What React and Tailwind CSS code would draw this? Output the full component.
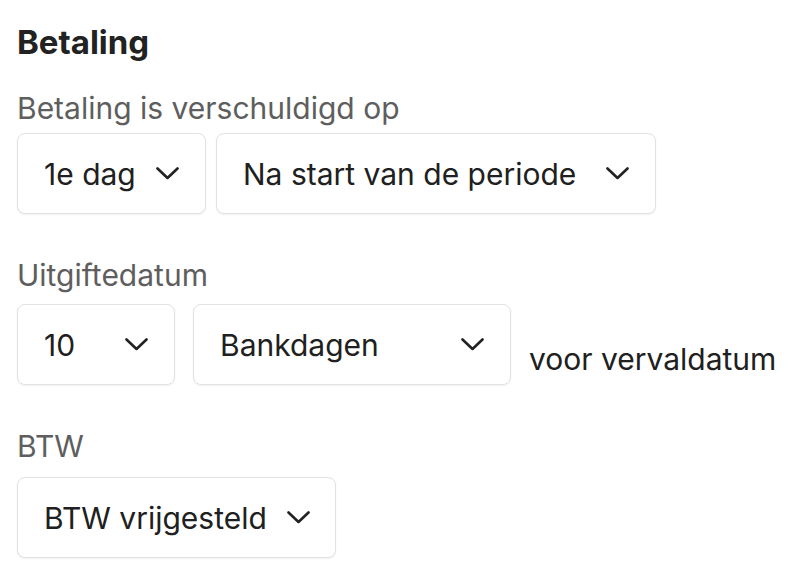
const font = { fontFamily: 'Inter, "Liberation Sans", sans-serif' };

function Chevron() {
  return (
    <svg width="23" height="13" viewBox="0 0 23 13" fill="none" className="shrink-0">
      <polyline
        points="1.5,1.5 11.5,11 21.5,1.5"
        stroke="#222"
        strokeWidth="2.6"
        strokeLinecap="round"
        strokeLinejoin="round"
      />
    </svg>
  );
}

function Select({ value, className = '' }) {
  return (
    <div
      className={`h-[81px] flex items-center justify-between gap-[20px] px-[26px] bg-white border border-[#e2e2e2] rounded-lg shadow-[0_1px_2px_rgba(0,0,0,0.06)] ${className}`}
    >
      <span className="text-[30px] leading-[36px] text-[#202020] whitespace-nowrap">{value}</span>
      <Chevron />
    </div>
  );
}

function Label({ children, className = '' }) {
  return (
    <div className={`text-[30px] leading-[36px] text-[#5e5e5e] ${className}`}>{children}</div>
  );
}

export default function App() {
  return (
    <div className="w-[810px] h-[586px] bg-white pl-[17px] pt-[24px]" style={font}>
      <h2 className="text-[33px] leading-[36px] font-bold text-[#222]">Betaling</h2>

      <Label className="mt-[30px]">Betaling is verschuldigd op</Label>
      <div className="flex gap-[10px] mt-[7px]">
        <Select value="1e dag" className="w-[189px]" />
        <Select value="Na start van de periode" className="w-[440px]" />
      </div>

      <Label className="mt-[43px]">Uitgiftedatum</Label>
      <div className="flex gap-[18px] mt-[11px]">
        <Select value="10" className="w-[158px]" />
        <Select value="Bankdagen" className="w-[318px]" />
        <span className="self-end mb-[8px] text-[30px] leading-[36px] text-[#202020] whitespace-nowrap">
          voor vervaldatum
        </span>
      </div>

      <Label className="mt-[43px]">BTW</Label>
      <div className="flex mt-[13px]">
        <Select value="BTW vrijgesteld" className="w-[319px]" />
      </div>
    </div>
  );
}
